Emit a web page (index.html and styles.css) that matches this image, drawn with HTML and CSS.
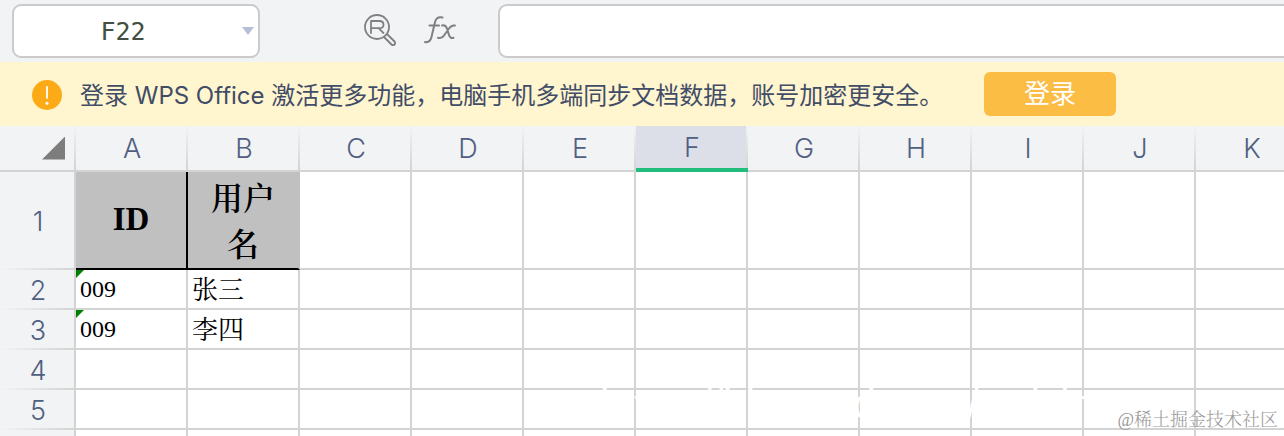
FILE: index.html
```html
<!DOCTYPE html>
<html lang="zh-CN">
<head>
<meta charset="utf-8">
<title>WPS Office</title>
<link rel="stylesheet" href="styles.css">
</head>
<body>
<div class="app">
  <div class="formula-bar">
    <div class="name-box">
      <input class="name-input" type="text" value="F22" aria-label="名称框">
      <button class="name-toggle" type="button" aria-label="展开名称框"></button>
    </div>
    <div class="tools">
      <button class="tool" type="button" aria-label="查找">
        <svg width="34" height="34" viewBox="0 0 34 34" fill="none" stroke="#808080" stroke-width="1.800" stroke-linecap="round" stroke-linejoin="round">
          <circle cx="13" cy="13" r="12"/>
          <path d="M7 19V7h8.500q4 0 4 3.700T15.500 14.200H7M14.500 14.200L19.500 19"/>
          <path d="M20 23L27.500 30.500a2.100 2.100 0 0 0 3-3L23 20"/>
        </svg>
      </button>
      <button class="tool" type="button" aria-label="插入函数">
        <svg width="34" height="34" viewBox="0 0 34 34" fill="none" stroke="#808080" stroke-width="2" stroke-linecap="round" stroke-linejoin="round">
          <path d="M1 28q5 1 6.500-5L11 8q1.500-6 7.500-4.500M5.500 11.500H15"/>
          <path d="M18 11.500q3.500-1 5 3l2 6.500q1.300 4 4.500 2.800M31 11.500q-3.500-.7-6 3l-5 7q-2.200 3.500-6 2.300"/>
        </svg>
      </button>
    </div>
    <input class="formula-input" type="text" aria-label="编辑栏">
  </div>

  <div class="notice">
    <svg class="notice-icon" width="30" height="30" viewBox="0 0 30 30" aria-hidden="true">
      <circle cx="15" cy="15" r="15" fill="#fcab17"/>
      <path d="M15 7v11" stroke="#fff" stroke-width="1.800" stroke-linecap="round"/>
      <circle cx="15" cy="23.200" r="1.500" fill="#fff"/>
    </svg>
    <span class="notice-text">登录 WPS Office 激活更多功能，电脑手机多端同步文档数据，账号加密更安全。</span>
    <button class="login" type="button">登录</button>
  </div>

  <div class="sheet">
    <table class="grid">
      <colgroup><col class="col-index"><col span="11" class="col-cell"></colgroup>
      <thead>
        <tr>
          <th class="corner"><button class="select-all" type="button" aria-label="全选"></button></th>
          <th scope="col">A</th><th scope="col">B</th><th scope="col">C</th><th scope="col">D</th><th scope="col">E</th><th scope="col" class="active">F</th><th scope="col">G</th><th scope="col">H</th><th scope="col">I</th><th scope="col">J</th><th scope="col">K</th>
        </tr>
      </thead>
      <tbody>
        <tr class="tall"><th scope="row">1</th><td class="title">ID</td><td class="title last">用户<br>名</td><td></td><td></td><td></td><td></td><td></td><td></td><td></td><td></td><td></td></tr>
        <tr><th scope="row">2</th><td class="flagged">009</td><td class="name">张三</td><td></td><td></td><td></td><td></td><td></td><td></td><td></td><td></td><td></td></tr>
        <tr><th scope="row">3</th><td class="flagged">009</td><td class="name">李四</td><td></td><td></td><td></td><td></td><td></td><td></td><td></td><td></td><td></td></tr>
        <tr><th scope="row">4</th><td></td><td></td><td></td><td></td><td></td><td></td><td></td><td></td><td></td><td></td><td></td></tr>
        <tr><th scope="row">5</th><td></td><td></td><td></td><td></td><td></td><td></td><td></td><td></td><td></td><td></td><td></td></tr>
        <tr><th scope="row"></th><td></td><td></td><td></td><td></td><td></td><td></td><td></td><td></td><td></td><td></td><td></td></tr>
      </tbody>
    </table>
  </div>
  <span class="source-mark">https://blog.csdn.net/weixin_</span>
  <span class="watermark">@稀土掘金技术社区</span>
</div>
</body>
</html>
```
FILE: styles.css
```css
* { box-sizing: border-box; }
body { margin: 0; font-family: "Inter", "Noto Sans CJK SC", sans-serif; background: #fff; }
button, input { font: inherit; margin: 0; padding: 0; border: 0; background: none; }
.app { position: relative; height: 100vh; overflow: hidden; }

.formula-bar { display: flex; align-items: flex-start; height: 62px; padding: 4px 0 0 12px; background: #f1f3f5; }
.name-box { display: flex; align-items: center; width: 248px; height: 54px; border: 2px solid #cbcbcb; border-radius: 9px; background: #fff; }
.name-input { flex: 1; min-width: 0; padding-right: 10px; text-align: center; font-family: "DejaVu Sans Mono", monospace; font-size: 25px; color: #434f40; }
.name-toggle { width: 12px; height: 8px; margin-right: 4px; background: #b7bfd8; clip-path: polygon(0 0, 100% 0, 50% 100%); }
.tools { display: flex; gap: 26px; width: 238px; padding: 10px 0 0 104px; }
.tool { width: 34px; height: 34px; flex: none; }
.tool svg { display: block; }
.formula-input { flex: 1; min-width: 0; height: 54px; padding: 0 12px; border: 2px solid #cbcbcb; border-right: 0; border-radius: 9px 0 0 9px; background: #fff; font-size: 24px; }

.notice { display: flex; align-items: center; height: 64px; padding-left: 32px; background: #fff5cf; }
.notice-icon { flex: none; margin-top: 2px; }
.notice-text { flex: none; width: 904px; padding: 4px 0 0 18px; font-size: 24px; font-weight: 400; line-height: 36px; white-space: nowrap; color: #414c67; }
.login { flex: none; width: 132px; height: 44px; margin-left: 18px; border-radius: 6px; background: #fcbd45; color: #fff; font-size: 26px; font-weight: 400; line-height: 44px; }

.grid { width: 1308px; table-layout: fixed; border-spacing: 0; }
.col-index { width: 76px; }
.col-cell { width: 112px; }
th { padding: 2px 0 0; font-size: 27px; font-weight: 300; color: #505f80; background: #f1f3f5; }
thead th { height: 46px; line-height: 42px; border-bottom: 2px solid #d3d3d3; background: linear-gradient(#f1f3f5, #d3d3d3) right / 2px 100% no-repeat #f1f3f5; }
thead .active { background-color: #dddfe8; border-bottom: 4px solid #20bd7c; line-height: 40px; }
thead .corner { padding: 0; }
.corner .select-all { display: block; width: 23px; height: 23px; margin-left: 42px; background: #7d7d7d; clip-path: polygon(100% 0, 100% 100%, 0 100%); }
tbody tr { height: 40px; }
tbody .tall { height: 98px; }
tbody th { padding-left: 2px; line-height: 38px; border-right: 2px solid #d3d3d3; background: linear-gradient(90deg, #f1f3f5, #d3d3d3) bottom / 100% 2px no-repeat #f1f3f5; }
td { position: relative; padding: 0 4px; border-right: 2px solid #d3d3d3; border-bottom: 2px solid #d3d3d3; font-family: "Liberation Serif", "Noto Serif CJK SC", "Noto Sans CJK SC", serif; font-size: 26px; line-height: 34px; color: #000; background: #fff; }
.name { padding-top: 4px; }
.title { padding: 0 0 2px; text-align: center; font-size: 33px; font-weight: 600; line-height: 48px; background: #c0c0c0; border-color: #000; }
.title.last { padding: 4px 0 0; font-size: 32px; line-height: 46px; border-right-color: #c0c0c0; }
.flagged { font-size: 24px; }
.flagged::before { content: ""; position: absolute; left: 0; top: 0; width: 8px; height: 8px; background: #008000; clip-path: polygon(0 0, 100% 0, 0 100%); }
.source-mark { position: absolute; left: 600px; bottom: 8px; font-family: "Liberation Sans", sans-serif; font-size: 41px; line-height: 48px; white-space: nowrap; color: #fff; clip-path: inset(0 0 10px); }
.watermark { position: absolute; right: 6px; bottom: 4px; font-family: "Liberation Serif", "Noto Serif CJK SC", "Noto Sans CJK SC", serif; font-size: 18px; font-weight: 300; line-height: 24px; color: #999; }
```
